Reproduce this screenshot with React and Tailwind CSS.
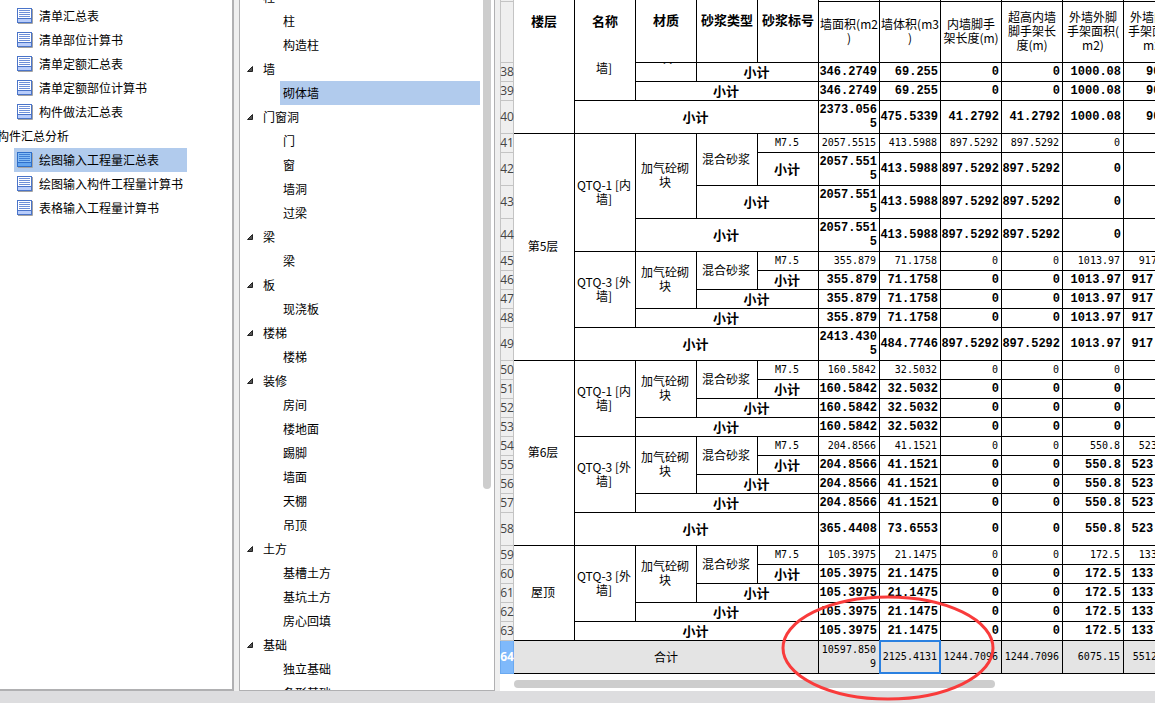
import clsx from "clsx";

const reportList = [
  "清单汇总表",
  "清单部位计算书",
  "清单定额汇总表",
  "清单定额部位计算书",
  "构件做法汇总表",
];

const analysisList = [
  "绘图输入工程量汇总表",
  "绘图输入构件工程量计算书",
  "表格输入工程量计算书",
];

const componentTree = [
  { name: "柱", items: ["柱", "构造柱"] },
  { name: "墙", items: ["砌体墙"] },
  { name: "门窗洞", items: ["门", "窗", "墙洞", "过梁"] },
  { name: "梁", items: ["梁"] },
  { name: "板", items: ["现浇板"] },
  { name: "楼梯", items: ["楼梯"] },
  { name: "装修", items: ["房间", "楼地面", "踢脚", "墙面", "天棚", "吊顶"] },
  { name: "土方", items: ["基槽土方", "基坑土方", "房心回填"] },
  { name: "基础", items: ["独立基础", "条形基础"] },
];

const labelHeads = ["楼层", "名称", "材质", "砂浆类型", "砂浆标号"];

const valueHeads = [
  ["墙面积(m2", ")"],
  ["墙体积(m3", ")"],
  ["内墙脚手", "架长度(m)"],
  ["超高内墙", "脚手架长", "度(m)"],
  ["外墙外脚", "手架面积(", "m2)"],
  ["外墙内脚", "手架面积(", "m2)"],
];

const sub = (cols) => ({ text: "小计", cols, bold: true });
const grade = { text: "M7.5", mono: true };
const mortar = { text: "混合砂浆", rows: 2 };
const block = { lines: ["加气砼砌", "块"], rows: 3 };
const innerWall = { lines: ["QTQ-1 [内", "墙]"], rows: 4 };
const outerWall = { lines: ["QTQ-3 [外", "墙]"], rows: 4 };

const v5a = ["2057.5515", "413.5988", "897.5292", "897.5292", "0", "0"];
const v5b = ["355.879", "71.1758", "0", "0", "1013.97", "917.315"];
const v6a = ["160.5842", "32.5032", "0", "0", "0", "0"];
const v6b = ["204.8566", "41.1521", "0", "0", "550.8", "523.125"];
const vRoof = ["105.3975", "21.1475", "0", "0", "172.5", "133.275"];

const rows = [
  {
    no: 38,
    labels: [
      { text: "", rows: 3 },
      { text: "墙]", rows: 2, raised: true },
      { text: "块", cut: true },
      sub(2),
    ],
    values: ["346.2749", "69.255", "0", "0", "1000.08", "90.15"],
  },
  {
    no: 39,
    labels: [sub(3)],
    values: ["346.2749", "69.255", "0", "0", "1000.08", "90.15"],
  },
  {
    no: 40,
    tall: true,
    labels: [sub(4)],
    values: ["2373.0565", "475.5339", "41.2792", "41.2792", "1000.08", "90.15"],
  },
  {
    no: 41,
    plain: true,
    labels: [{ text: "第5层", rows: 9 }, innerWall, block, mortar, grade],
    values: v5a,
  },
  { no: 42, tall: true, labels: [sub(1)], values: v5a },
  { no: 43, tall: true, labels: [sub(2)], values: v5a },
  { no: 44, tall: true, labels: [sub(3)], values: v5a },
  { no: 45, plain: true, labels: [outerWall, block, mortar, grade], values: v5b },
  { no: 46, labels: [sub(1)], values: v5b },
  { no: 47, labels: [sub(2)], values: v5b },
  { no: 48, labels: [sub(3)], values: v5b },
  {
    no: 49,
    tall: true,
    labels: [sub(4)],
    values: ["2413.4305", "484.7746", "897.5292", "897.5292", "1013.97", "917.315"],
  },
  {
    no: 50,
    plain: true,
    labels: [{ text: "第6层", rows: 9 }, innerWall, block, mortar, grade],
    values: v6a,
  },
  { no: 51, labels: [sub(1)], values: v6a },
  { no: 52, labels: [sub(2)], values: v6a },
  { no: 53, labels: [sub(3)], values: v6a },
  { no: 54, plain: true, labels: [outerWall, block, mortar, grade], values: v6b },
  { no: 55, labels: [sub(1)], values: v6b },
  { no: 56, labels: [sub(2)], values: v6b },
  { no: 57, labels: [sub(3)], values: v6b },
  {
    no: 58,
    tall: true,
    labels: [sub(4)],
    values: ["365.4408", "73.6553", "0", "0", "550.8", "523.125"],
  },
  {
    no: 59,
    plain: true,
    labels: [{ text: "屋顶", rows: 5 }, outerWall, block, mortar, grade],
    values: vRoof,
  },
  { no: 60, labels: [sub(1)], values: vRoof },
  { no: 61, labels: [sub(2)], values: vRoof },
  { no: 62, labels: [sub(3)], values: vRoof },
  { no: 63, labels: [sub(4)], values: vRoof },
  {
    no: 64,
    tall: true,
    plain: true,
    total: true,
    labels: [{ text: "合计", cols: 5 }],
    values: ["10597.8509", "2125.4131", "1244.7096", "1244.7096", "6075.15", "5512.125"],
  },
];

function ReportIcon({ active }) {
  return (
    <svg width="16" height="16" viewBox="0 0 16 16" className="shrink-0" aria-hidden="true">
      <path d="M1 15.5H15.5V1" fill="none" stroke="#a3a3a3" />
      <rect x="0.5" y="0.5" width="14" height="14" fill={active ? "#86bdf5" : "#fff"} stroke={active ? "#2f6fca" : "#4a74c9"} />
      <rect x="1" y="11" width="13" height="3" fill={active ? "#62a5f0" : "#b9cdfb"} />
      <path
        d="M2 2.5H13M2 4.5H13M2 6.5H13M2 8.5H13"
        stroke={active ? "#3f7fd6" : "#6f90d8"}
        shapeRendering="crispEdges"
      />
      <path d="M1 10.5H14" stroke={active ? "#2f6fca" : "#4a74c9"} shapeRendering="crispEdges" />
    </svg>
  );
}

function ReportItems({ names, selected }) {
  return (
    <ul className="ml-3.5 w-fit">
      {names.map((name) => (
        <li key={name}>
          <button
            className={clsx(
              "flex h-6 w-full items-center gap-1.5 whitespace-nowrap pl-[3px] pr-1 text-left",
              name === selected && "bg-[#b1cbed]"
            )}
          >
            <ReportIcon active={name === selected} />
            {name}
          </button>
        </li>
      ))}
    </ul>
  );
}

function ComponentTree() {
  return (
    <ul className="-mt-[15px] min-w-0 flex-1">
      {componentTree.map((group) => (
        <li key={group.name}>
          <button className="flex h-6 w-full items-center gap-2 pl-1.5 text-left">
            <svg width="8" height="8" viewBox="0 0 8 8" aria-hidden="true">
              <path d="M6.5 1.5V6.5H1.5Z" fill="#555" stroke="#222" />
            </svg>
            <span className="pl-px">{group.name}</span>
          </button>
          <ul className="ml-10">
            {group.items.map((item) => (
              <li key={item}>
                <button
                  className={clsx(
                    "block h-6 w-full pl-[3px] text-left",
                    item === "砌体墙" && "bg-[#b1cbed]"
                  )}
                >
                  {item}
                </button>
              </li>
            ))}
          </ul>
        </li>
      ))}
    </ul>
  );
}

function LabelCell({ label }) {
  return (
    <td
      rowSpan={label.rows}
      colSpan={label.cols}
      className={clsx(
        "border-b border-r border-black p-0 text-center",
        label.bold && "pr-0.5 text-[13px] font-bold",
        label.mono && "pr-0.5 font-['DejaVu_Sans_Mono',monospace] text-[10px]",
        label.raised && "align-top leading-[10px]",
        label.cut && "align-top",
        label.rows && "pb-0.5 pr-0.5"
      )}
    >
      {label.cut ? (
        <div className="flex h-0.5 items-end justify-center overflow-hidden">{label.text}</div>
      ) : (
        (label.lines || [label.text]).map((line) => (
          <div key={line} className="whitespace-nowrap">
            {line}
          </div>
        ))
      )}
    </td>
  );
}

function QuantityTable() {
  return (
    <table className="w-[685px] table-fixed border-separate border-spacing-0 leading-[14px]">
      <colgroup>
        <col className="w-[14px]" />
        {[...labelHeads, ...valueHeads].map((head) => (
          <col key={head} className="w-[61px]" />
        ))}
      </colgroup>
      <thead>
        <tr className="h-0.5">
          <td className="border border-t-0 border-[#c4c4c4] bg-[#efefef] p-0" />
          {labelHeads.map((head, i) => (
            <th
              key={head}
              rowSpan={2}
              className={clsx(
                "whitespace-nowrap border-r border-black p-0 pb-[22px] text-[13px] font-bold",
                i > 1 && "border-b"
              )}
            >
              {head}
            </th>
          ))}
          {valueHeads.map((head) => (
            <td key={head} className="border-b border-r border-black p-0" />
          ))}
        </tr>
        <tr className="h-[61px]">
          <td className="border border-t-0 border-[#c4c4c4] bg-[#efefef] p-0" />
          {valueHeads.map((head) => (
            <th key={head} className="whitespace-nowrap border-b border-r border-black p-0 pb-0.5 font-normal">
              {head.map((line) => (
                <div key={line}>{line}</div>
              ))}
            </th>
          ))}
        </tr>
      </thead>
      <tbody>
        {rows.map((row) => (
          <tr
            key={row.no}
            className={clsx(row.tall ? "h-[33px]" : "h-[19px]", row.total && "bg-[#e4e4e4]")}
          >
            <th
              className={clsx(
                "border border-t-0 p-0 font-['Open_Sans',sans-serif] text-xs leading-[14px]",
                row.total
                  ? "border-[#6aa9f0] bg-[#7fb9fb] font-bold text-white"
                  : "border-[#c4c4c4] bg-[#efefef] font-normal text-[#444]"
              )}
            >
              <div className="flex justify-center">{row.no}</div>
            </th>
            {row.labels.map((label, i) => (
              <LabelCell key={i} label={label} />
            ))}
            {row.values.map((value, i) => (
              <td
                key={i}
                className={clsx(
                  "relative break-all border-b border-r border-black text-right",
                  row.plain
                    ? "py-0 pl-0 pr-[3px] font-['DejaVu_Sans_Mono',monospace] text-[10px]"
                    : "py-0 pl-0 pr-0.5 font-['Liberation_Mono',monospace] text-xs leading-[14px] font-bold"
                )}
              >
                {value}
                {row.total && i === 1 && (
                  <div className="absolute -inset-px border-2 border-[#2a80e0]" />
                )}
              </td>
            ))}
          </tr>
        ))}
      </tbody>
    </table>
  );
}

export default function App() {
  return (
    <div className="flex h-screen flex-col overflow-hidden bg-[#dddddf] font-['Noto_Sans_CJK_SC',sans-serif] text-xs leading-6 text-black">
      <main className="relative flex min-h-0 flex-1 bg-[#efefef]">
        <nav className="w-[234px] shrink-0 overflow-hidden border-b-2 border-r-2 border-[#b0b0b2] bg-white pt-1">
          <ReportItems names={reportList} />
          <h2 className="-ml-[3px] h-6">构件汇总分析</h2>
          <ReportItems names={analysisList} selected="绘图输入工程量汇总表" />
        </nav>

        <nav className="ml-[5px] flex w-64 shrink-0 overflow-hidden border-x border-b border-[#b0b0b2] bg-white">
          <ComponentTree />
          <div className="ml-[3px] mr-[3px] h-[489px] w-2 rounded-b-full bg-[#cdcdcd]" />
        </nav>

        <section className="ml-[5px] flex min-w-0 flex-1 flex-col overflow-hidden bg-white">
          <QuantityTable />
          <div className="ml-3.5 mt-1.5 h-2 w-[481px] shrink-0 rounded-full bg-[#cdcdcd]" />
        </section>

        <svg
          width="216"
          height="108"
          viewBox="0 0 216 108"
          className="pointer-events-none absolute left-[780px] top-[594px]"
          aria-hidden="true"
        >
          <ellipse cx="108" cy="54" rx="105" ry="51" fill="none" stroke="#f93b3b" strokeWidth="3" />
        </svg>
      </main>
      <footer className="h-3 shrink-0" />
    </div>
  );
}
